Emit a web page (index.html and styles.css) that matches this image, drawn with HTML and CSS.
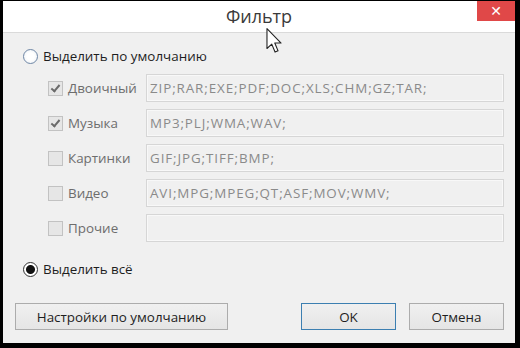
FILE: index.html
```html
<!DOCTYPE html>
<html lang="ru">

<head>
    <meta charset="UTF-8">
    <title>Фильтр</title>
    <link rel="stylesheet" href="styles.css">
</head>

<body>
    <div class="window">
        <header class="titlebar">
            <div class="title">Фильтр</div>
            <button class="close">&#x2715;</button>
        </header>
        <div class="content">
            <label class="radio-row">
                <span class="radio"></span>
                Выделить по умолчанию
            </label>
            <div class="types">
                <div class="type-row">
                    <span class="check checked"></span>
                    <span class="type-label">Двоичный</span>
                    <div class="field">ZIP;RAR;EXE;PDF;DOC;XLS;CHM;GZ;TAR;</div>
                </div>
                <div class="type-row">
                    <span class="check checked"></span>
                    <span class="type-label">Музыка</span>
                    <div class="field">MP3;PLJ;WMA;WAV;</div>
                </div>
                <div class="type-row">
                    <span class="check"></span>
                    <span class="type-label">Картинки</span>
                    <div class="field">GIF;JPG;TIFF;BMP;</div>
                </div>
                <div class="type-row">
                    <span class="check"></span>
                    <span class="type-label">Видео</span>
                    <div class="field">AVI;MPG;MPEG;QT;ASF;MOV;WMV;</div>
                </div>
                <div class="type-row">
                    <span class="check"></span>
                    <span class="type-label">Прочие</span>
                    <div class="field"></div>
                </div>
            </div>
            <label class="radio-row radio-all">
                <span class="radio selected"></span>
                Выделить всё
            </label>
            <div class="buttons">
                <button class="btn btn-defaults">Настройки по умолчанию</button>
                <button class="btn btn-ok">OK</button>
                <button class="btn">Отмена</button>
            </div>
        </div>
    </div>

    <!-- mouse pointer over the title -->
    <svg class="pointer" width="17" height="26" viewBox="0 0 12 19">
        <path d="M0.5 0.5 L0.5 15 L4 11.8 L6.4 17.6 L8.6 16.7 L6.2 11 L10.8 11 Z"
            fill="#fff" stroke="#222" stroke-width="0.8" stroke-linejoin="round" />
    </svg>
</body>

</html>
```

FILE: styles.css
```css
html {
    background-color: #000;
}

body {
    margin: 0;
    font-family: "Open Sans", "Liberation Sans", sans-serif;
    font-size: 13.4px;
    color: #1e1e1e;
}

.window {
    /* black frame round the dialog like in the capture */
    margin: 1px 5px 5px 3px;
    height: 342px;
    background-color: #f0f0f0;
    display: flex;
    flex-direction: column;
}

.titlebar {
    display: flex;
    height: 31px;
    background-color: #fff;
    border-bottom: 1px solid #dadada;
}

.title {
    flex: 1;
    padding-left: 38px;
    text-align: center;
    font-size: 18px;
    line-height: 30px;
    color: #3a3a3a;
}

.close {
    width: 38px;
    height: 20px;
    padding: 0;
    border: 0;
    background-color: #e04848;
    color: #fff;
    font-size: 14px;
    font-weight: bold;
    font-family: "DejaVu Sans", sans-serif;
}

.content {
    flex: 1;
    padding: 15px 11px 0 20px;
}

.radio-row {
    display: flex;
    align-items: center;
    gap: 5px;
    height: 16px;
}

.radio {
    width: 13px;
    height: 13px;
    border: 1px solid #6f87a6;
    border-radius: 50%;
    background: radial-gradient(circle, #fff 40%, #e8edf2);
}

.radio.selected {
    border-color: #333;
    background: radial-gradient(circle, #111 4px, #fff 5px);
}

.types {
    display: flex;
    flex-direction: column;
    gap: 7px;
    margin-top: 10px;
    padding-left: 25px;
}

.type-row {
    display: flex;
    align-items: center;
    height: 28px;
}

.check {
    position: relative;
    width: 13px;
    height: 13px;
    border: 1px solid #c2c2c2;
    background-color: #e6e6e6;
}

.check.checked::after {
    content: "";
    position: absolute;
    left: 4px;
    top: 1px;
    width: 3px;
    height: 7px;
    border: solid #6a6a6a;
    border-width: 0 2px 2px 0;
    transform: rotate(40deg);
}

.type-label {
    width: 78px;
    margin-left: 5px;
    color: #6d6d6d;
}

.field {
    flex: 1;
    height: 26px;
    line-height: 26px;
    padding-left: 3px;
    border: 1px solid #d6d6d6;
    box-shadow: inset 0 0 0 1px #f8f8f8;
    color: #8a8a8a;
    letter-spacing: 0.9px;
}

.radio-all {
    margin-top: 19px;
}

.buttons {
    display: flex;
    margin-top: 26px;
    margin-left: -8px;
}

.btn {
    height: 27px;
    padding: 0;
    border: 1px solid #acacac;
    background: linear-gradient(#f0f0f0, #e5e5e5);
    font-family: "Open Sans", "Liberation Sans", sans-serif;
    font-size: 13.4px;
    color: #1e1e1e;
    width: 95px;
    margin-left: 13px;
}

.btn-defaults {
    width: 213px;
    margin-left: 0;
    margin-right: auto;
}

.btn-ok {
    border-color: #3c7fb1;
}

.pointer {
    position: absolute;
    left: 266px;
    top: 28px;
}
```
